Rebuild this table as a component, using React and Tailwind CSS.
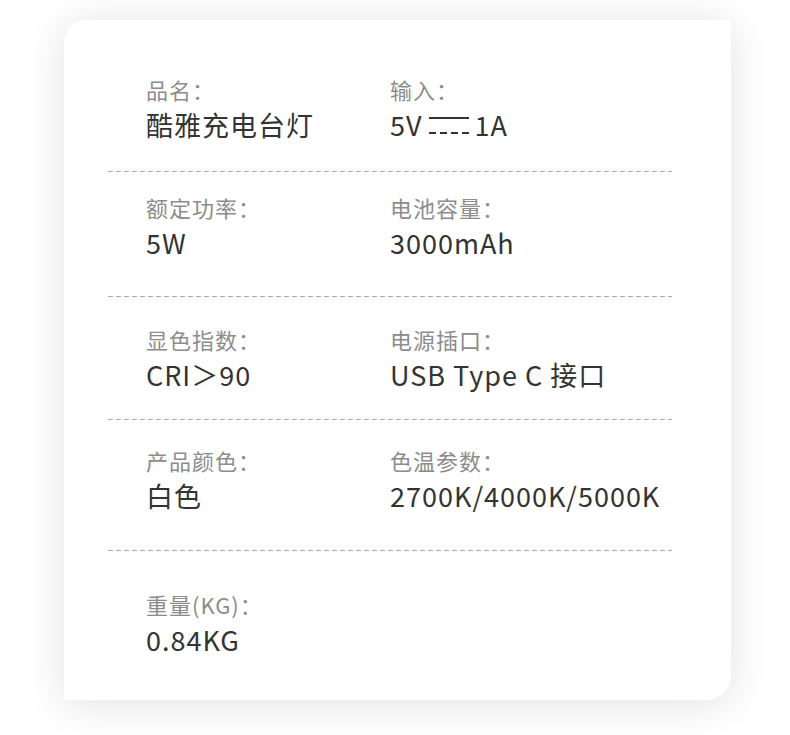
import React from 'react';

const specs = [
    { pt: 'pt-[55px]', pb: 'pb-[28px]', items: [['品名：', '酷雅充电台灯'], ['输入：', 'dc']] },
    { pt: 'pt-[21px]', pb: 'pb-[35px]', items: [['额定功率：', '5W'], ['电池容量：', '3000mAh']] },
    { pt: 'pt-[28px]', pb: 'pb-[26px]', items: [['显色指数：', 'CRI＞90'], ['电源插口：', 'USB Type C 接口']] },
    { pt: 'pt-[26px]', pb: 'pb-[36px]', items: [['产品颜色：', '白色'], ['色温参数：', '2700K/4000K/5000K']] },
    { pt: 'pt-[39px]', pb: 'pb-[42px]', items: [['重量(KG)：', '0.84KG']] },
];

// 直流符号 ⎓
function DcMark() {
    return (
        <svg width="40" height="20" viewBox="0 0 40 20" className="ml-[6px] mr-[6px] inline-block">
            <line x1="0" y1="3" x2="40" y2="3" stroke="#333" strokeWidth="2" />
            <line x1="0" y1="18" x2="7" y2="18" stroke="#333" strokeWidth="2" />
            <line x1="11" y1="18" x2="18" y2="18" stroke="#333" strokeWidth="2" />
            <line x1="22" y1="18" x2="29" y2="18" stroke="#333" strokeWidth="2" />
            <line x1="33" y1="18" x2="40" y2="18" stroke="#333" strokeWidth="2" />
        </svg>
    );
}

function Spec({ label, value }) {
    return (
        <div className="flex flex-col">
            <span className="text-[22px] leading-[28px] text-[#8c8c8c] tracking-[1px]">{label}</span>
            <span className="mt-[4px] flex items-center text-[27px] leading-[36px] text-[#333] tracking-[1px]">
                {value === 'dc' ? (
                    <>5V<DcMark />1A</>
                ) : value}
            </span>
        </div>
    );
}

export default function App() {
    return (
        <div className="min-h-screen bg-white pl-[64px] pt-[20px] font-['Noto_Sans_CJK_SC','Noto_Sans',sans-serif]">
            <div className="w-[667px] rounded-tl-[22px] rounded-br-[24px] bg-white pl-[44px] pr-[59px] shadow-[0_4px_40px_rgba(0,0,0,0.12)]">
                {specs.map((row, idx) => (
                    <div key={idx}>
                        {idx > 0 && (
                            <div className="h-px bg-[repeating-linear-gradient(to_right,#ababab_0_5px,transparent_5px_8px)]" />
                        )}
                        <div className={`grid grid-cols-[244px_1fr] pl-[38px] ${row.pt} ${row.pb}`}>
                            {row.items.map(([label, value]) => (
                                <Spec key={label} label={label} value={value} />
                            ))}
                        </div>
                    </div>
                ))}
            </div>
        </div>
    );
}
